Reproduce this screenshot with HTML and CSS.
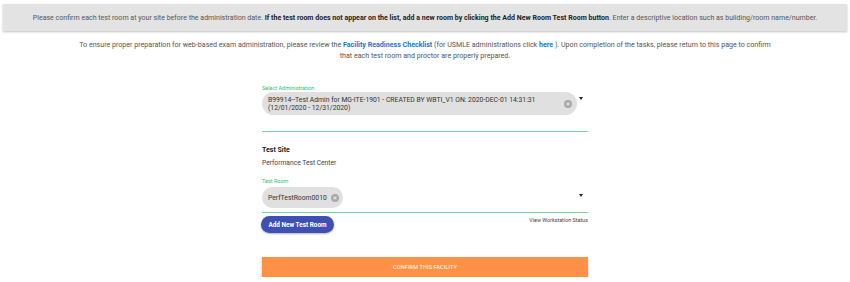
FILE: index.html
```html
<!DOCTYPE html>
<html>
<head>
<meta charset="utf-8">
<link rel="stylesheet" href="styles.css">
</head>
<body>
<div class="banner">
  <p>Please confirm each test room at your site before the administration date. <b>If the test room does not appear on the list, add a new room by clicking the Add New Room Test Room button</b>. Enter a descriptive location such as building/room name/number.</p>
</div>
<p class="intro">To ensure proper preparation for web-based exam administration, please review the <a href="#">Facility Readiness Checklist</a> (for USMLE administrations click <a href="#">here</a> ). Upon completion of the tasks, please return to this page to confirm<br>that each test room and proctor are properly prepared.</p>
<div class="form">
  <div class="field field-admin">
    <div class="field-label">Select Administration</div>
    <div class="field-row">
      <div class="chip chip-wide">
        <span class="chip-text">B99914--Test Admin for MG-ITE-1901 - CREATED BY WBTI_V1 ON: 2020-DEC-01 14:31:31<br>(12/01/2020 - 12/31/2020)</span>
        <svg class="chip-close" viewBox="0 0 10 10" width="8" height="8"><circle cx="5" cy="5" r="5" fill="#a8a8a8"/><path d="M3.2 3.2L6.8 6.8M6.8 3.2L3.2 6.8" stroke="#e4e4e4" stroke-width="1.3"/></svg>
      </div>
      <span class="caret"></span>
    </div>
  </div>
  <div class="site">
    <div class="site-title">Test Site</div>
    <div class="site-name">Performance Test Center</div>
  </div>
  <div class="field field-room">
    <div class="field-label">Test Room</div>
    <div class="field-row">
      <div class="chip">
        <span class="chip-text">PerfTestRoom0010</span>
        <svg class="chip-close" viewBox="0 0 10 10" width="8" height="8"><circle cx="5" cy="5" r="5" fill="#a8a8a8"/><path d="M3.2 3.2L6.8 6.8M6.8 3.2L3.2 6.8" stroke="#e4e4e4" stroke-width="1.3"/></svg>
      </div>
      <span class="caret"></span>
    </div>
  </div>
  <div class="actions">
    <button class="btn-add">Add New Test Room</button>
    <a class="status-link" href="#">View Workstation Status</a>
  </div>
  <button class="btn-confirm">CONFIRM THIS FACILITY</button>
</div>
</body>
</html>
```
FILE: styles.css
```css
* { box-sizing: border-box; }
body {
  margin: 0;
  font-family: Roboto, "Liberation Sans", sans-serif;
  color: #444;
  background: #fff;
}
.banner {
  margin: 4px 3px 0 3px;
  height: 27px;
  background: #e3e3e3;
  box-shadow: 0 1px 2px rgba(0,0,0,0.25);
  display: flex;
  align-items: center;
  justify-content: center;
}
.banner p {
  margin: 0;
  font-size: 7.05px;
  color: #555;
  white-space: nowrap;
}
.banner b { color: #222; }
.intro {
  margin: 8px auto 0;
  text-align: center;
  font-size: 7.1px;
  line-height: 11px;
  color: #555;
}
.intro a {
  color: #1976d2;
  font-weight: bold;
  text-decoration: none;
}
.form {
  width: 326px;
  margin: 24px auto 0;
}
.field {
  border-bottom: 1px solid #6fd6a4;
}
.field-label {
  font-size: 5.5px;
  color: #2ec46e;
  line-height: 7px;
}
.field-row {
  display: flex;
  align-items: flex-start;
  justify-content: space-between;
}
.chip {
  display: flex;
  align-items: center;
  background: #e0e0e0;
  border-radius: 11px;
  padding: 0 4px 0 6px;
  height: 21px;
}
.chip-wide {
  width: 315px;
  height: 23px;
  border-radius: 12px;
  padding-right: 5px;
  justify-content: space-between;
}
.chip-text {
  font-size: 6.8px;
  line-height: 8px;
  color: #333;
}
.chip-close {
  margin-left: 4px;
  flex: none;
}
.caret {
  width: 0;
  height: 0;
  border-left: 2.5px solid transparent;
  border-right: 2.5px solid transparent;
  border-top: 3px solid #222;
  margin: 5px 5px 0 0;
}
.field-admin { padding-bottom: 16px; }
.field-room { padding-bottom: 4px; margin-top: 10px; }
.field-room .field-row { margin-top: 2px; }
.field-room .caret { margin-top: 7px; }
.site { margin-top: 13px; }
.site-title {
  font-size: 7px;
  font-weight: bold;
  color: #222;
  line-height: 10px;
}
.site-name {
  font-size: 6.7px;
  color: #444;
  margin-top: 3px;
  line-height: 10px;
}
.actions {
  display: flex;
  justify-content: space-between;
  align-items: flex-start;
  margin-top: 3px;
}
.btn-add {
  margin-left: -1px;
  width: 73px;
  height: 17px;
  border: none;
  border-radius: 9px;
  background: #3f4fb4;
  color: #fff;
  font-family: Roboto, "Liberation Sans", sans-serif;
  font-weight: bold;
  font-size: 6.4px;
  padding: 0;
  box-shadow: 0 1px 2px rgba(0,0,0,0.3);
}
.status-link {
  font-size: 5.4px;
  color: #444;
  text-decoration: none;
  margin-top: 1px;
}
.btn-confirm {
  display: block;
  width: 326px;
  height: 20px;
  margin-top: 24px;
  border: none;
  background: #ff9146;
  color: #fff;
  font-family: Roboto, "Liberation Sans", sans-serif;
  font-size: 5.6px;
  letter-spacing: 0.1px;
  box-shadow: 0 1px 2px rgba(0,0,0,0.3);
}
```
